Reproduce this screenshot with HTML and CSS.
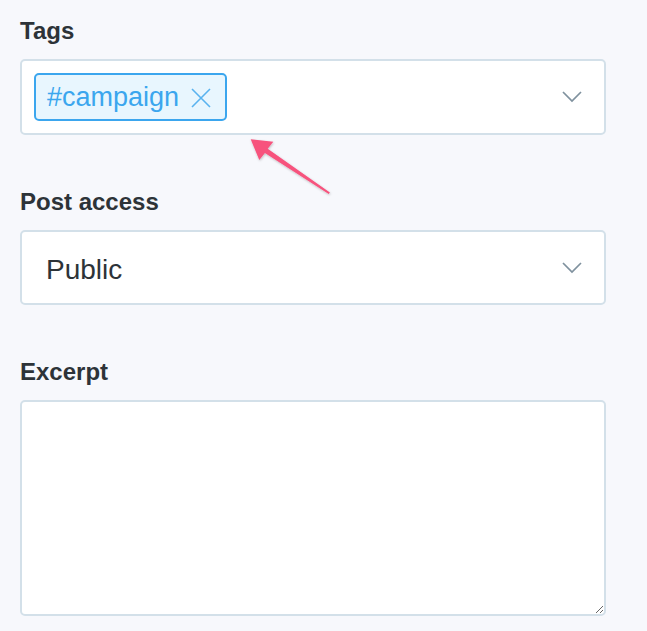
FILE: index.html
```html
<!DOCTYPE html>
<html>
<head>
<meta charset="utf-8">
<link rel="stylesheet" href="styles.css">
</head>
<body>
<div class="form">
  <div class="group">
    <label class="label">Tags</label>
    <div class="field tags">
      <span class="chip">#campaign
        <svg class="chip-x" width="20" height="20" viewBox="0 0 20 20"><path d="M1 1L19 19M19 1L1 19" stroke="#59b3ef" stroke-width="1.6" fill="none"/></svg>
      </span>
      <svg class="chevron" width="20" height="12" viewBox="0 0 20 12"><path d="M1 1L10 10L19 1" stroke="#7f919e" stroke-width="1.7" fill="none"/></svg>
    </div>
  </div>
  <div class="group">
    <label class="label">Post access</label>
    <div class="field select">
      <span class="value">Public</span>
      <svg class="chevron" width="20" height="12" viewBox="0 0 20 12"><path d="M1 1L10 10L19 1" stroke="#7f919e" stroke-width="1.7" fill="none"/></svg>
    </div>
  </div>
  <div class="group last">
    <label class="label">Excerpt</label>
    <textarea class="field textarea"></textarea>
  </div>
</div>
<svg class="arrow" width="647" height="631" viewBox="0 0 647 631">
  <defs>
    <filter id="sh" x="-20%" y="-20%" width="140%" height="140%">
      <feDropShadow dx="0.5" dy="1" stdDeviation="1" flood-color="#000" flood-opacity="0.25"/>
    </filter>
  </defs>
  <polygon filter="url(#sh)" fill="#f7527d" points="250.7,139.3 273.3,141.7 267.7,148.8 329.9,192.5 328.7,194.1 264.9,152.9 259.3,160"/>
</svg>
</body>
</html>
```
FILE: styles.css
```css
html, body {
  margin: 0;
  padding: 0;
  background: #f7f8fc;
}
body {
  font-family: "Liberation Sans", Arial, sans-serif;
  color: #2d3338;
  overflow: hidden;
}
.form {
  padding: 16px 0 0 20px;
  width: 586px;
}
.group {
  margin-bottom: 52px;
}
.group.last {
  margin-bottom: 0;
}
.label {
  display: block;
  font-size: 24px;
  line-height: 30px;
  font-weight: bold;
  margin-bottom: 13px;
}
.field {
  box-sizing: border-box;
  width: 586px;
  background: #fff;
  border: 2px solid #d3e0e9;
  border-radius: 5px;
}
.tags {
  height: 76px;
  padding: 12px 22px 12px 12px;
  display: flex;
  align-items: center;
  justify-content: space-between;
}
.chip {
  box-sizing: border-box;
  height: 48px;
  display: flex;
  align-items: center;
  padding: 1px 14px 0 11px;
  border: 2px solid #3ba6ee;
  background: #e8f6fe;
  border-radius: 5px;
  color: #3ba6ee;
  font-size: 27px;
}
.chip-x {
  margin-left: 12px;
}
.select {
  height: 75px;
  padding: 5px 22px 0 24px;
  display: flex;
  align-items: center;
  justify-content: space-between;
}
.select .chevron {
  margin-top: -5px;
}
.value {
  font-size: 28px;
}
.textarea {
  display: block;
  height: 216px;
  resize: both;
  font-family: inherit;
  margin: 0;
  outline: none;
}
.arrow {
  position: absolute;
  left: 0;
  top: 0;
  pointer-events: none;
}
```
